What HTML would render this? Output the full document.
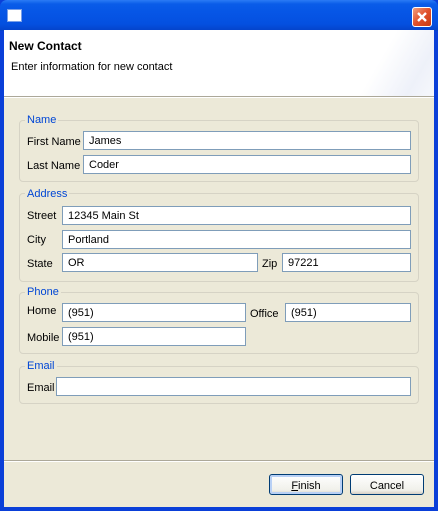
<!DOCTYPE html>
<html><head><meta charset="utf-8"><style>
*{margin:0;padding:0;box-sizing:border-box}
body{width:438px;height:511px;overflow:hidden;font-family:"Liberation Sans",Arial,sans-serif;font-size:11px;color:#000;position:relative;background:#0a3fd8}
.abs{position:absolute}
.title{left:0;top:0;width:438px;height:31px;background:linear-gradient(#2b7bf5 0,#0a5ce8 4px,#0656e6 12px,#0450e0 24px,#0442c8 31px);border-radius:7px 7px 0 0}
.frame{left:4px;top:30px;width:430px;height:477px;background:#ece9d8}
.header{left:4px;top:30px;width:430px;height:66px;background:linear-gradient(120deg,#fff 84%,#eef1f9 94%,#f6f8fc 100%)}
.sep{left:4px;width:430px;height:2px;border-top:1px solid #aca899;border-bottom:1px solid #fff}
.box{border:1px solid #d6d3c5;border-radius:4px}
.leg{color:#0046d5;background:#ece9d8;padding:0 2px}
.in{background:#fff;border:1px solid #7f9db9;height:19px;padding:3px 0 0 5px}
.btn{border:1px solid #003c74;border-radius:3px;background:linear-gradient(#fff,#f0f0ea 80%,#d6d0c5);text-align:center;padding-top:5px;height:21px}
</style></head><body>
<div class="abs title"></div>
<div class="abs" style="left:8px;top:10px;width:13px;height:11px;background:#fff;border-top:3px solid #fff;box-shadow:0 0 0 1px #7aa0e8"></div>
<div class="abs" style="left:412px;top:7px;width:20px;height:20px;background:linear-gradient(135deg,#f0a080,#e0502a 50%,#c83a10);border:1px solid #fff;border-radius:3px">
<svg width="18" height="18" viewBox="0 0 18 18" style="position:absolute;left:0;top:0"><path d="M5 5L13 13M13 5L5 13" stroke="#fff" stroke-width="2.4"/></svg></div>
<div class="abs frame"></div>
<div class="abs header"></div>
<div class="abs" style="left:9px;top:39px;font-weight:bold;font-size:12px">New Contact</div>
<div class="abs" style="left:11px;top:61px">Enter information for new contact</div>
<div class="abs sep" style="top:96px"></div>

<div class="abs box" style="left:19px;top:120px;width:400px;height:62px"></div>
<div class="abs leg" style="left:25px;top:114px">Name</div>
<div class="abs" style="left:27px;top:136px">First Name</div>
<div class="abs in" style="left:83px;top:131px;width:328px">James</div>
<div class="abs" style="left:27px;top:160px">Last Name</div>
<div class="abs in" style="left:83px;top:155px;width:328px">Coder</div>

<div class="abs box" style="left:19px;top:193px;width:400px;height:89px"></div>
<div class="abs leg" style="left:25px;top:188px">Address</div>
<div class="abs" style="left:27px;top:210px">Street</div>
<div class="abs in" style="left:62px;top:206px;width:349px">12345 Main St</div>
<div class="abs" style="left:27px;top:234px">City</div>
<div class="abs in" style="left:62px;top:230px;width:349px">Portland</div>
<div class="abs" style="left:27px;top:258px">State</div>
<div class="abs in" style="left:62px;top:253px;width:196px">OR</div>
<div class="abs" style="left:262px;top:258px">Zip</div>
<div class="abs in" style="left:282px;top:253px;width:129px">97221</div>

<div class="abs box" style="left:19px;top:292px;width:400px;height:62px"></div>
<div class="abs leg" style="left:25px;top:286px">Phone</div>
<div class="abs" style="left:27px;top:305px">Home</div>
<div class="abs in" style="left:62px;top:303px;width:184px">(951)</div>
<div class="abs" style="left:250px;top:308px">Office</div>
<div class="abs in" style="left:285px;top:303px;width:126px">(951)</div>
<div class="abs" style="left:27px;top:332px">Mobile</div>
<div class="abs in" style="left:62px;top:327px;width:184px">(951)</div>

<div class="abs box" style="left:19px;top:366px;width:400px;height:38px"></div>
<div class="abs leg" style="left:25px;top:360px">Email</div>
<div class="abs" style="left:27px;top:382px">Email</div>
<div class="abs in" style="left:56px;top:377px;width:355px"></div>

<div class="abs sep" style="top:460px"></div>
<div class="abs btn" style="left:269px;top:474px;width:74px;box-shadow:inset 0 0 0 2px #b8d0f5"><u>F</u>inish</div>
<div class="abs btn" style="left:350px;top:474px;width:74px">Cancel</div>
</body></html>
